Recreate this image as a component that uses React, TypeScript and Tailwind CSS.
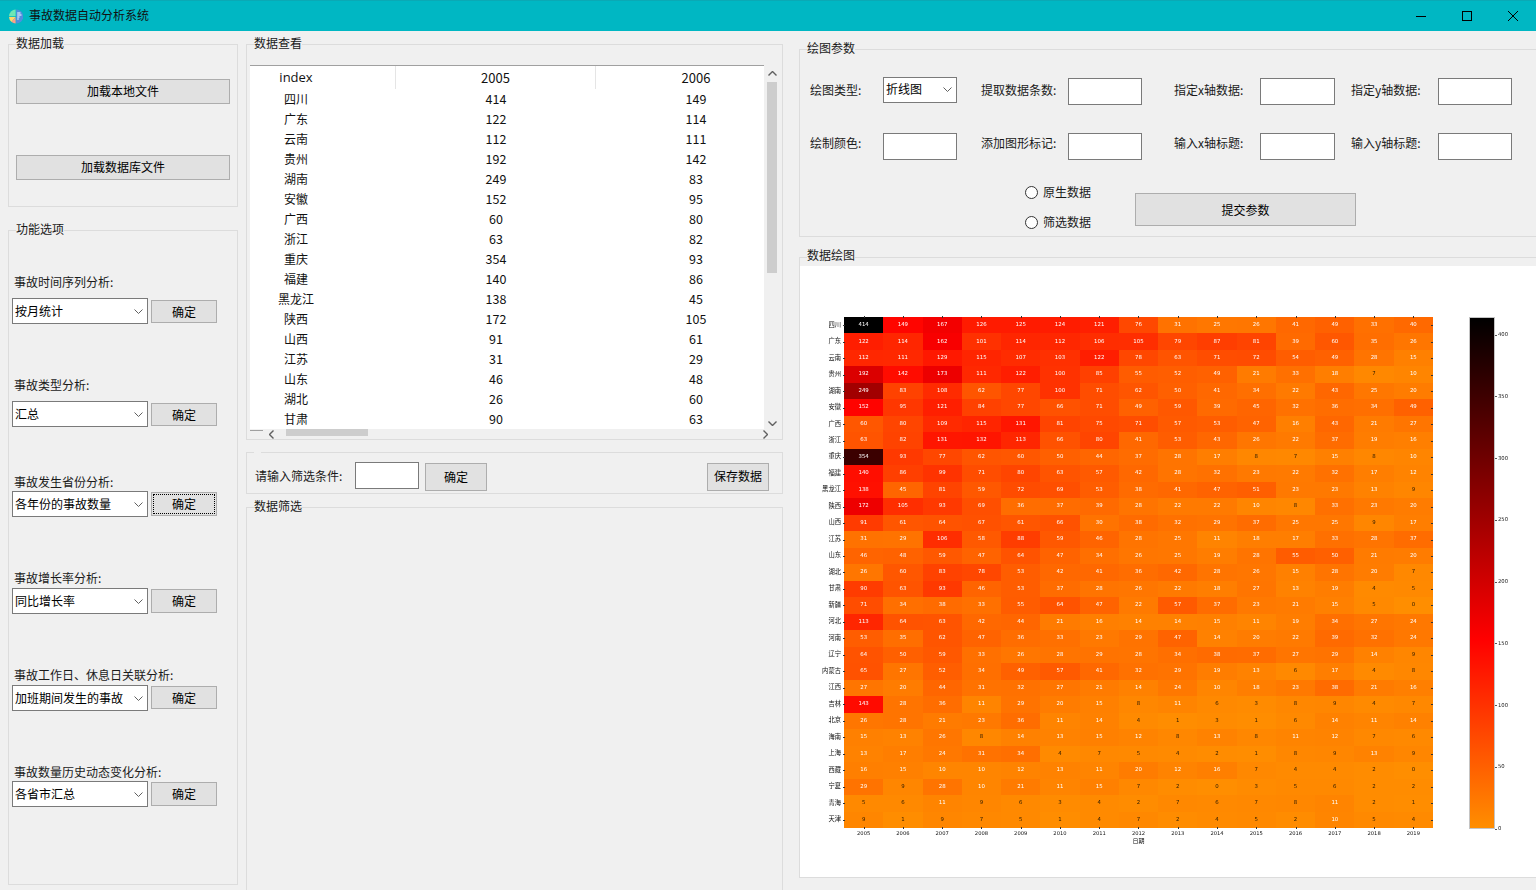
const cjk = "font-['Noto_Sans_CJK_SC','Liberation_Sans',sans-serif]";

const provinces = ["四川", "广东", "云南", "贵州", "湖南", "安徽", "广西", "浙江", "重庆", "福建", "黑龙江", "陕西", "山西", "江苏", "山东", "湖北", "甘肃", "新疆", "河北", "河南", "辽宁", "内蒙古", "江西", "吉林", "北京", "海南", "上海", "西藏", "宁夏", "青海", "天津"];

const years = [2005, 2006, 2007, 2008, 2009, 2010, 2011, 2012, 2013, 2014, 2015, 2016, 2017, 2018, 2019];

const data = [
  [414, 149, 167, 126, 125, 124, 121, 76, 31, 25, 26, 41, 49, 33, 40],
  [122, 114, 162, 101, 114, 112, 106, 105, 79, 87, 81, 39, 60, 35, 26],
  [112, 111, 129, 115, 107, 103, 122, 78, 63, 71, 72, 54, 49, 28, 15],
  [192, 142, 173, 111, 122, 100, 85, 55, 52, 49, 21, 33, 18, 7, 10],
  [249, 83, 108, 62, 77, 100, 71, 62, 50, 41, 34, 22, 43, 25, 20],
  [152, 95, 121, 84, 77, 66, 71, 49, 59, 39, 45, 32, 36, 34, 49],
  [60, 80, 109, 115, 131, 81, 75, 71, 57, 53, 47, 16, 43, 21, 27],
  [63, 82, 131, 132, 113, 66, 80, 41, 53, 43, 26, 22, 37, 19, 16],
  [354, 93, 77, 62, 60, 50, 44, 37, 28, 17, 8, 7, 15, 8, 10],
  [140, 86, 99, 71, 80, 63, 57, 42, 28, 32, 23, 22, 32, 17, 12],
  [138, 45, 81, 59, 72, 69, 53, 38, 41, 47, 51, 23, 23, 13, 9],
  [172, 105, 93, 69, 36, 37, 39, 28, 22, 22, 10, 8, 33, 23, 20],
  [91, 61, 64, 67, 61, 66, 30, 38, 32, 29, 37, 25, 25, 9, 17],
  [31, 29, 106, 58, 88, 59, 46, 28, 25, 11, 18, 17, 33, 28, 37],
  [46, 48, 59, 47, 64, 47, 34, 26, 25, 19, 28, 55, 50, 21, 20],
  [26, 60, 83, 78, 53, 42, 41, 36, 42, 28, 26, 15, 28, 20, 7],
  [90, 63, 93, 46, 53, 37, 28, 26, 22, 18, 27, 13, 19, 4, 5],
  [71, 34, 38, 33, 55, 64, 47, 22, 57, 37, 23, 21, 15, 5, 0],
  [113, 64, 63, 42, 44, 21, 16, 14, 14, 15, 11, 19, 34, 27, 24],
  [53, 35, 62, 47, 36, 33, 23, 29, 47, 14, 20, 22, 39, 32, 24],
  [64, 50, 59, 33, 26, 28, 29, 28, 34, 38, 37, 27, 29, 14, 9],
  [65, 27, 52, 34, 49, 57, 41, 32, 29, 19, 13, 6, 17, 4, 8],
  [27, 20, 44, 31, 32, 27, 21, 14, 24, 10, 18, 23, 38, 21, 16],
  [143, 28, 36, 11, 29, 20, 15, 8, 11, 6, 3, 8, 9, 4, 7],
  [26, 28, 21, 23, 36, 11, 14, 4, 1, 3, 1, 6, 14, 11, 14],
  [15, 13, 26, 8, 14, 13, 15, 12, 8, 13, 8, 11, 12, 7, 6],
  [13, 17, 24, 31, 34, 4, 7, 5, 4, 2, 1, 8, 9, 13, 9],
  [16, 15, 10, 10, 12, 13, 11, 20, 12, 16, 7, 4, 4, 2, 0],
  [29, 9, 28, 10, 21, 11, 15, 7, 2, 0, 3, 5, 6, 2, 2],
  [5, 6, 11, 9, 6, 3, 4, 2, 7, 6, 7, 8, 11, 2, 1],
  [9, 1, 9, 7, 5, 1, 4, 7, 2, 4, 5, 2, 10, 5, 4],
];

const analyses = [
  { label: "事故时间序列分析:", value: "按月统计", rowClass: "mt-[44px]", gapClass: "mb-[9px]", btnClass: "mt-[2px] h-[23px]" },
  { label: "事故类型分析:", value: "汇总", rowClass: "mt-[54px]", gapClass: "mb-[9px]", btnClass: "mt-[2px] h-[23px]" },
  { label: "事故发生省份分析:", value: "各年份的事故数量", rowClass: "mt-[48px]", gapClass: "mb-[2px]", btnClass: "mt-[1px] h-[24px] outline-1 outline-dotted outline-black -outline-offset-3" },
  { label: "事故增长率分析:", value: "同比增长率", rowClass: "mt-[54px]", gapClass: "mb-[3px]", btnClass: "mt-[1px] h-[24px]" },
  { label: "事故工作日、休息日关联分析:", value: "加班期间发生的事故", rowClass: "mt-[54px]", gapClass: "mb-[3px]", btnClass: "mt-[1px] h-[23px]" },
  { label: "事故数量历史动态变化分析:", value: "各省市汇总", rowClass: "mt-[54px]", gapClass: "mb-[2px]", btnClass: "mt-[1px] h-[24px]" },
];

// orange at 0, pure red around 155, black at the top of the scale
function cellColor(v: number) {
  if (v <= 155) return `rgb(255, ${Math.round(142 * (1 - v / 155))}, 0)`;
  return `rgb(${Math.round(255 * (1 - (v - 155) / 259))}, 0, 0)`;
}

function GroupBox({ title, className, titleClass = "top-[-9px]", children }: { title?: string; className: string; titleClass?: string; children?: React.ReactNode }) {
  return (
    <div className={`relative shrink-0 border border-[#dcdcdc] ${className}`}>
      {title ? (
        <span className={`absolute left-[7px] h-[14px] bg-[#f0f0f0] text-[12px] leading-[14px] text-[#1a1a1a] ${titleClass}`}>{title}</span>
      ) : (
        <span className="absolute left-[7px] top-[-1px] h-px w-[7px] bg-[#f0f0f0]" />
      )}
      {children}
    </div>
  );
}

function Btn({ children, className }: { children: React.ReactNode; className: string }) {
  return (
    <div className={`flex shrink-0 items-center justify-center border border-[#adadad] bg-[#e1e1e1] text-[12px] text-black ${className}`}>
      {children}
    </div>
  );
}

function Chevron({ className = "", bold = false }: { className?: string; bold?: boolean }) {
  return (
    <svg width="9" height="5" viewBox="0 0 9 5" className={className}>
      <path d="M0.5 0.5 L4.5 4.5 L8.5 0.5" fill="none" stroke={bold ? "#606060" : "#606060"} strokeWidth={bold ? 1.4 : 1} />
    </svg>
  );
}

function Combo({ value, className }: { value: string; className: string }) {
  return (
    <div className={`flex shrink-0 items-center justify-between border border-[#7a7a7a] bg-white pl-[2px] pr-[4px] text-[12px] text-black ${className}`}>
      <span className="whitespace-nowrap">{value}</span>
      <Chevron />
    </div>
  );
}

function Field({ label, labelClass, inputClass, combo }: { label: string; labelClass: string; inputClass: string; combo?: string }) {
  return (
    <div className="flex items-start">
      <span className={`h-[14px] whitespace-nowrap text-[12px] leading-[14px] text-[#1a1a1a] ${labelClass}`}>{label}</span>
      {combo ? <Combo value={combo} className={`h-[26px] pb-[2px] ${inputClass}`} /> : <div className={`mt-[1px] h-[27px] shrink-0 border border-[#7a7a7a] bg-white ${inputClass}`} />}
    </div>
  );
}

function Radio({ label }: { label: string }) {
  return (
    <div className="flex h-[14px] items-center">
      <span className="h-[13px] w-[13px] rounded-full border border-[#333] bg-white" />
      <span className="ml-[5px] whitespace-nowrap text-[12px] leading-[14px] text-[#1a1a1a]">{label}</span>
    </div>
  );
}

function Heatmap() {
  return (
    <div className="flex h-[611px] bg-white pt-[51px] blur-[0.3px] font-['DejaVu_Sans','Liberation_Sans',sans-serif]">
      <div className={`flex h-[511px] w-[44px] shrink-0 flex-col ${cjk}`}>
        {provinces.map((name) => (
          <div key={name} className="flex flex-1 items-center justify-end pb-px pr-[3px] text-[6.3px] leading-none text-[#111]">
            {name}
          </div>
        ))}
      </div>
      <div className="w-[589px] shrink-0">
        <div className="grid h-[511px] grid-cols-[repeat(15,1fr)] grid-rows-[repeat(31,1fr)]">
          {data.flatMap((row, r) =>
            row.map((v, c) => (
              <div
                key={`${r}-${c}`}
                className={`relative flex items-center justify-center pb-px text-[5.4px] leading-none ${v < 10 ? "text-[#2a1a00]" : "text-white"}`}
                style={{ backgroundColor: cellColor(v) }}
              >
                {v}
                {c === 0 && <span className="absolute left-[-1px] top-1/2 h-px w-[2px] bg-[#333]" />}
                {c === 14 && <span className="absolute right-0 top-1/2 h-px w-[2px] bg-[#333]" />}
                {r === 0 && <span className="absolute left-1/2 top-[-1px] h-[2px] w-px bg-[#333]" />}
                {r === 30 && <span className="absolute bottom-[-1px] left-1/2 h-[2px] w-px bg-[#333]" />}
              </div>
            )),
          )}
        </div>
        <div className="mt-[2px] grid grid-cols-[repeat(15,1fr)]">
          {years.map((y) => (
            <span key={y} className="text-center text-[5.2px] leading-[7px] text-[#111]">
              {y}
            </span>
          ))}
        </div>
        <div className={`text-center text-[6px] leading-[8px] text-[#111] ${cjk}`}>日期</div>
      </div>
      <div className="ml-[36px] h-[512px] w-[26px] shrink-0 border border-[#c4c4c4] bg-[linear-gradient(to_top,#ff8e00_0%,#ff0000_37%,#000000_100%)]" />
      <div className="mt-[1px] flex h-[511px] flex-col justify-between pt-[17px]">
        {[400, 350, 300, 250, 200, 150, 100, 50, 0].map((t) => (
          <div key={t} className="flex h-0 items-center text-[5.3px] text-[#222]">
            <span className="h-px w-[2px] bg-[#555]" />
            <span className="ml-px">{t}</span>
          </div>
        ))}
      </div>
    </div>
  );
}

function LeftColumn() {
  return (
    <div className="ml-[8px] w-[230px] shrink-0 pt-[13px]">
      <GroupBox title="数据加载" className="h-[163px] w-[230px] pl-[7px] pt-[34px]">
        <Btn className="h-[25px] w-[214px] pb-[2px]">加载本地文件</Btn>
        <Btn className="mt-[51px] h-[25px] w-[214px] pb-[2px]">加载数据库文件</Btn>
      </GroupBox>
      <GroupBox title="功能选项" className="mt-[23px] h-[655px] w-[230px] pl-[3px]">
        {analyses.map((a) => (
          <div key={a.label} className={a.rowClass}>
            <div className={`ml-[2px] h-[14px] whitespace-nowrap text-[12px] leading-[14px] text-[#1a1a1a] ${a.gapClass}`}>{a.label}</div>
            <div className="flex items-start">
              <Combo value={a.value} className="h-[26px] w-[136px]" />
              <Btn className={`ml-[3px] w-[66px] ${a.btnClass}`}>确定</Btn>
            </div>
          </div>
        ))}
      </GroupBox>
    </div>
  );
}

function DataTable() {
  return (
    <div className="flex h-[364px]">
      <div className="w-[514px] shrink-0 overflow-hidden border-t border-[#a0a0a0] bg-white">
        <div className="flex h-[23px] text-[13px] text-[#111]">
          <div className="flex h-full w-[146px] shrink-0 border-r border-[#e5e5e5]">
            <span className="w-[92px] pt-[2px] text-center font-['Open_Sans',sans-serif]">index</span>
          </div>
          <div className="h-full w-[200px] shrink-0 border-r border-[#e5e5e5] pt-[2px] text-center">2005</div>
          <div className="h-full w-[200px] shrink-0 pt-[2px] text-center">2006</div>
        </div>
        {provinces.slice(0, 17).map((name, i) => (
          <div key={name} className="flex h-[20px] items-center text-[12.5px] text-[#111]">
            <span className="w-[92px] shrink-0 text-center text-[12px]">{name}</span>
            <span className="ml-[54px] w-[200px] shrink-0 text-center">{data[i][0]}</span>
            <span className="w-[200px] shrink-0 text-center">{data[i][1]}</span>
          </div>
        ))}
      </div>
      <div className="ml-[2px] flex w-[12px] shrink-0 flex-col items-center">
        <div className="flex h-[17px] items-center">
          <Chevron bold className="rotate-180" />
        </div>
        <div className="h-[191px] w-[10px] bg-[#cdcdcd]" />
        <div className="mt-auto flex h-[12px] items-center">
          <Chevron bold />
        </div>
      </div>
    </div>
  );
}

function MiddleColumn() {
  return (
    <div className="ml-[8px] w-[537px] shrink-0 pt-[13px]">
      <GroupBox title="数据查看" className="h-[396px] w-[537px] pl-[3px] pt-[20px]">
        <DataTable />
        <div className="flex h-[9px] items-start">
          <span className="mt-[1px] h-px w-[13px] bg-[#a0a0a0]" />
          <Chevron bold className="ml-[4px] mt-[3px] rotate-90" />
          <div className="ml-[10px] h-[7px] w-[82px] bg-[#cdcdcd]" />
          <Chevron bold className="ml-[393px] mt-[3px] -rotate-90" />
        </div>
      </GroupBox>
      <GroupBox className="mt-[12px] flex h-[42px] w-[537px] items-start pl-[8px] pt-[9px]">
        <span className="mt-[7px] h-[14px] w-[100px] shrink-0 whitespace-nowrap text-[12px] leading-[14px] text-[#1a1a1a]">请输入筛选条件:</span>
        <div className="h-[27px] w-[64px] shrink-0 border border-[#7a7a7a] bg-white" />
        <Btn className="ml-[6px] mt-[1px] h-[28px] w-[62px]">确定</Btn>
        <Btn className="ml-auto mr-[13px] mt-[1px] h-[28px] w-[62px] pb-[2px]">保存数据</Btn>
      </GroupBox>
      <GroupBox title="数据筛选" className="mt-[13px] h-[420px] w-[537px]" />
    </div>
  );
}

function RightColumn() {
  return (
    <div className="ml-[16px] w-[745px] shrink-0 pt-[18px]">
      <GroupBox title="绘图参数" className="h-[188px] w-[745px] pl-[10px] pt-[27px]">
        <div className="grid grid-cols-[171px_193px_177px_161px] gap-y-[27px]">
          <Field label="绘图类型:" labelClass="mt-[6px] w-[73px]" inputClass="w-[74px]" combo="折线图" />
          <Field label="提取数据条数:" labelClass="mt-[6px] w-[87px]" inputClass="w-[74px]" />
          <Field label="指定x轴数据:" labelClass="mt-[6px] w-[86px]" inputClass="w-[75px]" />
          <Field label="指定y轴数据:" labelClass="mt-[6px] w-[87px]" inputClass="w-[74px]" />
          <Field label="绘制颜色:" labelClass="mt-[4px] w-[73px]" inputClass="w-[74px]" />
          <Field label="添加图形标记:" labelClass="mt-[4px] w-[87px]" inputClass="w-[74px]" />
          <Field label="输入x轴标题:" labelClass="mt-[4px] w-[86px]" inputClass="w-[75px]" />
          <Field label="输入y轴标题:" labelClass="mt-[4px] w-[87px]" inputClass="w-[74px]" />
        </div>
        <div className="ml-[215px] mt-[25px] flex items-start">
          <div className="flex w-[110px] shrink-0 flex-col gap-[16px]">
            <Radio label="原生数据" />
            <Radio label="筛选数据" />
          </div>
          <Btn className="mt-[8px] h-[33px] w-[221px]">提交参数</Btn>
        </div>
      </GroupBox>
      <GroupBox title="数据绘图" titleClass="top-[-10px]" className="mt-[20px] h-[621px] w-[745px] pt-[8px]">
        <Heatmap />
      </GroupBox>
    </div>
  );
}

export default function App() {
  return (
    <div className={`h-[890px] w-full overflow-hidden bg-[#f0f0f0] text-[12px] ${cjk}`}>
      <header className="flex h-[31px] items-center border-t border-[#0aa9b5] bg-[#00b7c3]">
        <svg width="14" height="15" viewBox="0 0 14 15" className="ml-[9px]">
          <path d="M6.6 0.5 A7 7 0 0 0 0 7.2 L6.6 7.2 Z" fill="#6fe6b5" />
          <path d="M0 7.9 A7 7 0 0 0 2.6 13 L6.6 7.9 Z" fill="#ffd76a" />
          <path d="M2.6 13 A7 7 0 0 0 6.6 14.5 L6.6 7.9 Z" fill="#ff9e8a" />
          <path d="M7.2 0.5 A7 7 0 0 1 7.2 14.5 Z" fill="#4f8ede" />
          <path d="M8.2 4 H11.5 M8.2 6 H12.5 M8.2 8 H10.5 M8.2 10 H9.8" stroke="#fff" strokeWidth="1" />
        </svg>
        <span className="mb-[2px] ml-[6px] text-[12px] text-[#111]">事故数据自动分析系统</span>
        <div className="ml-auto flex h-full">
          <div className="flex w-[46px] items-center justify-center">
            <span className="h-px w-[10px] bg-black" />
          </div>
          <div className="flex w-[46px] items-center justify-center">
            <span className="h-[10px] w-[10px] border border-black" />
          </div>
          <div className="flex w-[46px] items-center justify-center">
            <svg width="10" height="10" viewBox="0 0 10 10">
              <path d="M0 0 L10 10 M10 0 L0 10" stroke="#000" strokeWidth="1" />
            </svg>
          </div>
        </div>
      </header>
      <main className="flex">
        <LeftColumn />
        <MiddleColumn />
        <RightColumn />
      </main>
    </div>
  );
}
